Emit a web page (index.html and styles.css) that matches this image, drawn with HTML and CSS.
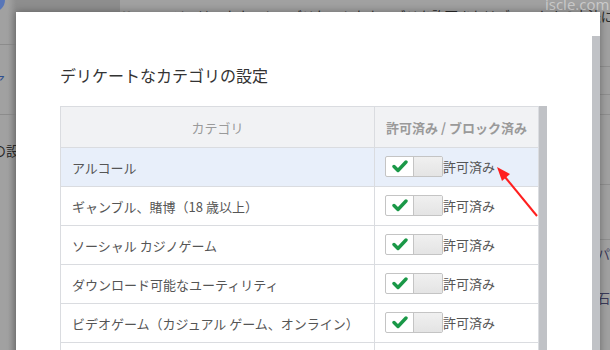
FILE: index.html
```html
<!DOCTYPE html>
<html lang="ja">
<head>
    <meta charset="utf-8" />
    <title>デリケートなカテゴリの設定</title>
    <link rel="stylesheet" href="styles.css">
</head>
<body>
<div class="page">
    <div class="side">
        <div class="side-top"><span class="avatar"></span></div>
        <div class="side-item"><span class="side-link">ア</span></div>
        <div class="side-item side-text">の設定</div>
    </div>
    <div class="main">
        <div class="main-top">このページではアカウントのデリケートなカテゴリを許可またはブロックする方法について説明します。新規作成</div>
        <div class="main-row"></div>
        <div class="main-row short"></div>
        <div class="main-row tall"></div>
        <div class="main-row mid"></div>
        <div class="main-row note">(パ</div>
        <div class="main-row note">石</div>
    </div>
</div>

<div class="modal">
    <div class="modal-body">
        <h1>デリケートなカテゴリの設定</h1>
        <div class="grid-wrap">
            <table class="grid">
                <tr>
                    <th class="col-cat">カテゴリ</th>
                    <th class="col-state">許可済み / ブロック済み</th>
                </tr>
                <tr class="selected">
                    <td>アルコール</td>
                    <td class="state"><span class="toggle"><span class="on"><svg width="16" height="13" viewBox="0 0 16 13"><path d="M2 6.5 L6 10.5 L14 2" /></svg></span><span class="off"></span></span>許可済み</td>
                </tr>
                <tr>
                    <td>ギャンブル、賭博（18 歳以上）</td>
                    <td class="state"><span class="toggle"><span class="on"><svg width="16" height="13" viewBox="0 0 16 13"><path d="M2 6.5 L6 10.5 L14 2" /></svg></span><span class="off"></span></span>許可済み</td>
                </tr>
                <tr>
                    <td>ソーシャル カジノゲーム</td>
                    <td class="state"><span class="toggle"><span class="on"><svg width="16" height="13" viewBox="0 0 16 13"><path d="M2 6.5 L6 10.5 L14 2" /></svg></span><span class="off"></span></span>許可済み</td>
                </tr>
                <tr>
                    <td>ダウンロード可能なユーティリティ</td>
                    <td class="state"><span class="toggle"><span class="on"><svg width="16" height="13" viewBox="0 0 16 13"><path d="M2 6.5 L6 10.5 L14 2" /></svg></span><span class="off"></span></span>許可済み</td>
                </tr>
                <tr>
                    <td>ビデオゲーム（カジュアル ゲーム、オンライン）</td>
                    <td class="state"><span class="toggle"><span class="on"><svg width="16" height="13" viewBox="0 0 16 13"><path d="M2 6.5 L6 10.5 L14 2" /></svg></span><span class="off"></span></span>許可済み</td>
                </tr>
                <tr>
                    <td>&nbsp;</td>
                    <td class="state"></td>
                </tr>
            </table>
            <div class="grid-scroll"></div>
        </div>
    </div>
    <div class="modal-scroll"></div>
</div>

<svg class="arrow" width="610" height="350" viewBox="0 0 610 350">
    <line x1="537" y1="216" x2="505" y2="177" />
    <polygon points="497,167 510,174 502,181" />
</svg>
<div class="watermark">iscle.com</div>
</body>
</html>
```

FILE: styles.css
```css
html, body {
    margin: 0;
    height: 100%;
    overflow: hidden;
}

body {
    background-color: #a1a1a1;
    font-family: "Noto Sans CJK JP", "Liberation Sans", sans-serif;
    font-size: 13px;
    color: #555;
    position: relative;
}

/* page behind the dialog (already dimmed) */
.page {
    display: flex;
    height: 100%;
}

.side {
    width: 120px;
    flex-shrink: 0;
    display: flex;
    flex-direction: column;
    background: linear-gradient(to right, #a1a1a1 8px, #8e8e8e 16px);
}

.side-top {
    height: 44px;
    border-bottom: 1px solid #8c8c8c;
    overflow: hidden;
}

.avatar {
    display: block;
    width: 24px;
    height: 24px;
    border-radius: 50%;
    background-color: #5876b8;
    margin: -12px 0 0 -19px;
}

.side-item {
    height: 69px;
    border-bottom: 1px solid #8c8c8c;
    display: flex;
    align-items: center;
}

.side-link {
    color: #2f4f8f;
    margin-left: -8px;
}

.side-text {
    border-bottom: none;
    color: #2a2a2a;
    font-size: 14px;
    align-items: flex-start;
    padding-top: 25px;
    margin-left: -8px;
    white-space: nowrap;
}

.main {
    flex: 1;
    min-width: 0;
    display: flex;
    flex-direction: column;
}

.main-top {
    padding: 6px 0 0 0;
    height: 60px;
    white-space: nowrap;
    text-align: right;
    color: #2a2a2a;
    border-bottom: 1px solid #8f8f8f;
    overflow: hidden;
    margin-right: -4px;
}

.main-row {
    height: 27px;
    border-bottom: 1px solid #8f8f8f;
}

.main-row.short { height: 19px; }
.main-row.tall { height: 69px; }
.main-row.mid { height: 54px; }

.main-row.note {
    height: 40px;
    color: #3a3a5a;
    text-align: right;
    padding-top: 4px;
    border-bottom: none;
}

/* dialog */
.modal {
    position: absolute;
    left: 16px;
    top: 12px;
    width: 584px;
    height: 380px;
    background-color: #fff;
    box-shadow: 0 0 8px rgba(0, 0, 0, 0.35);
    display: flex;
}

.modal-body {
    flex: 1;
    padding: 52px 0 0 44px;
}

.modal-scroll {
    width: 8px;
    margin-top: 24px;
    background-color: #c0c2c6;
}

h1 {
    font-size: 16px;
    font-weight: normal;
    line-height: 22px;
    margin: 0 0 20px 0;
    color: #333;
}

.grid-wrap {
    display: flex;
}

.grid {
    width: 479px;
    border-collapse: collapse;
    table-layout: fixed;
}

.grid-scroll {
    width: 8px;
    background-color: #c0c2c6;
}

.grid th, .grid td {
    border: 1px solid #dadce0;
    padding: 0 11px;
    white-space: nowrap;
}

.grid th {
    background-color: #f1f2f4;
    color: #9a9a9a;
    height: 40px;
    font-weight: normal;
}

.grid th.col-cat {
    width: 291px;
}

.grid th.col-state {
    font-weight: bold;
    padding: 0 6px;
}

.grid td {
    height: 38px;
}

.grid tr.selected td {
    background-color: #e8effa;
}

.grid td.state {
    padding: 0 0 0 10px;
    color: #555;
}

.toggle {
    display: inline-flex;
    vertical-align: middle;
    width: 56px;
    height: 19px;
    border: 1px solid #c4c4c4;
    border-radius: 2px;
    margin: -2px 0 0 0;
    background-color: #fff;
}

.toggle .on {
    width: 27px;
    display: flex;
    align-items: center;
    justify-content: center;
}

.toggle .on path {
    fill: none;
    stroke: #1a9847;
    stroke-width: 3.4;
    stroke-linecap: round;
    stroke-linejoin: round;
}

.toggle .off {
    flex: 1;
    border-left: 1px solid #c4c4c4;
    background: linear-gradient(#f0f0f0, #e4e4e4);
}

/* annotation */
.arrow {
    position: absolute;
    left: 0;
    top: 0;
    pointer-events: none;
}

.arrow line {
    stroke: #ff1f1f;
    stroke-width: 2;
}

.arrow polygon {
    fill: #ff1f1f;
}

.watermark {
    position: absolute;
    left: 545px;
    top: -6px;
    font-family: "Open Sans", sans-serif;
    font-size: 15px;
    color: rgba(255, 255, 255, 0.45);
}
```
